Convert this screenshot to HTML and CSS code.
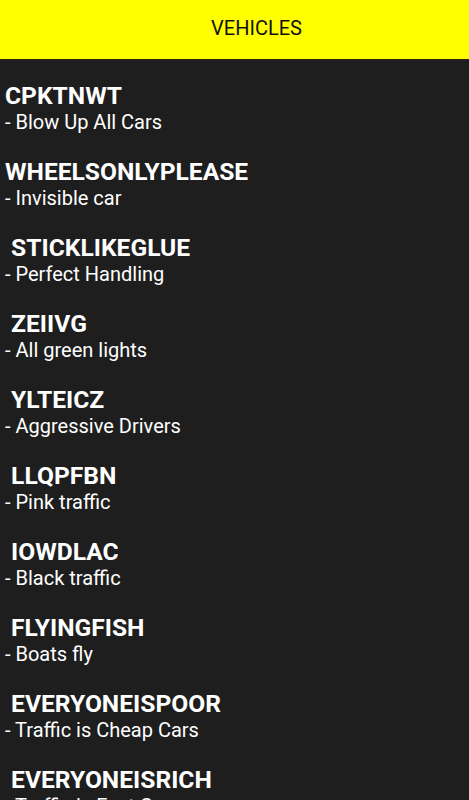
FILE: index.html
```html
<!DOCTYPE html>
<html>
<head>
<meta charset="utf-8">
<link rel="stylesheet" href="styles.css">
</head>
<body>
<header class="topbar"><span class="topbar-title">VEHICLES</span></header>
<ul class="cheats">
  <li class="cheat"><div class="code">CPKTNWT</div><div class="desc">- Blow Up All Cars</div></li>
  <li class="cheat"><div class="code">WHEELSONLYPLEASE</div><div class="desc">- Invisible car</div></li>
  <li class="cheat"><div class="code"> STICKLIKEGLUE</div><div class="desc">- Perfect Handling</div></li>
  <li class="cheat"><div class="code"> ZEIIVG</div><div class="desc">- All green lights</div></li>
  <li class="cheat"><div class="code"> YLTEICZ</div><div class="desc">- Aggressive Drivers</div></li>
  <li class="cheat"><div class="code"> LLQPFBN</div><div class="desc">- Pink traffic</div></li>
  <li class="cheat"><div class="code"> IOWDLAC</div><div class="desc">- Black traffic</div></li>
  <li class="cheat"><div class="code"> FLYINGFISH</div><div class="desc">- Boats fly</div></li>
  <li class="cheat"><div class="code"> EVERYONEISPOOR</div><div class="desc">- Traffic is Cheap Cars</div></li>
  <li class="cheat"><div class="code"> EVERYONEISRICH</div><div class="desc">- Traffic is Fast Cars</div></li>
</ul>
</body>
</html>
```
FILE: styles.css
```css
html, body {
  margin: 0;
  padding: 0;
  background: #1e1e1e;
  font-family: Roboto, "Noto Sans", sans-serif;
  overflow: hidden;
  height: 800px;
}
.topbar {
  height: 60px;
  background: #ffff00;
  border-bottom: 1px solid #2a2a10;
  box-sizing: border-box;
  display: flex;
  align-items: center;
  justify-content: center;
  padding-left: 44px;
}
.topbar-title {
  font-size: 20px;
  color: #111;
  margin-top: -4px;
}
.cheats {
  list-style: none;
  margin: 0;
  padding: 0 0 0 5px;
}
.cheat {
  padding: 22px 0 2px;
  color: #ffffff;
}
.code {
  font-size: 24.6px;
  font-weight: 700;
  line-height: 28px;
  white-space: pre;
}
.desc {
  font-size: 20px;
  line-height: 24px;
}
```
